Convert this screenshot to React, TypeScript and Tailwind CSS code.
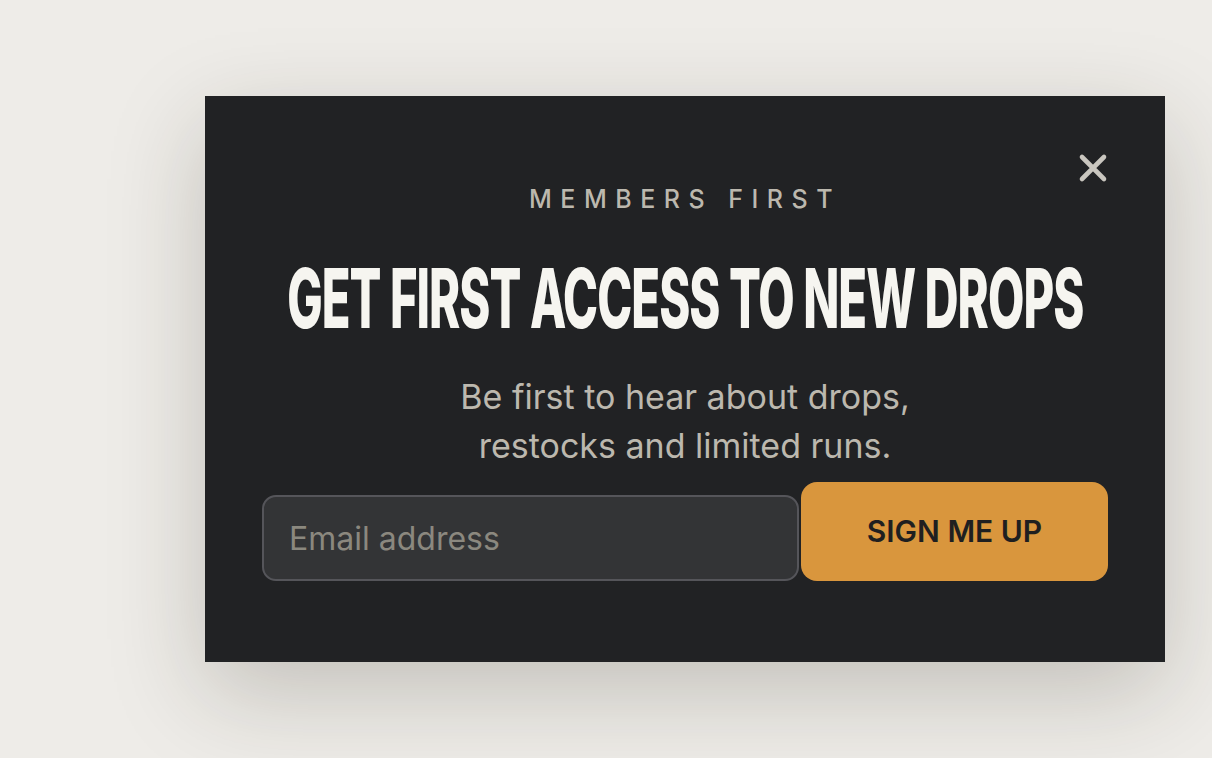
import React from 'react';

export default function App() {
    return (
        <main className="min-h-screen w-full bg-[#eeece8] pl-[205px] pt-[96px] font-['Inter','Liberation_Sans',sans-serif]">
            <div className="relative w-[960px] bg-[#212224] px-[57px] pt-[88px] pb-[81px] shadow-[0_30px_90px_rgba(40,35,25,0.22)]">
                <button aria-label="Close" className="absolute top-[55px] right-[55px] w-[34px] h-[34px] flex items-center justify-center text-[#c9c6bf]">
                    <svg width="30" height="30" viewBox="0 0 30 30" fill="none" stroke="currentColor" strokeWidth="4.6" strokeLinecap="round">
                        <path d="M4 4 L26 26 M26 4 L4 26" />
                    </svg>
                </button>

                <p className="text-center text-[25px] leading-[30px] font-medium tracking-[0.34em] text-[#bcb8ae]">MEMBERS FIRST</p>

                <div className="mt-[40px] flex justify-center">
                    <h1 className="inline-block whitespace-nowrap origin-center scale-x-[0.575] text-[82px] leading-[90px] font-extrabold tracking-[-0.02em] text-[#f6f5f0]">
                        GET FIRST ACCESS TO NEW DROPS
                    </h1>
                </div>

                <p className="mt-[28px] text-center text-[34px] leading-[49px] text-[#bcb8ae]">
                    Be first to hear about drops,<br />restocks and limited runs.
                </p>

                <form className="mt-[12px] flex items-end" onSubmit={(e) => e.preventDefault()}>
                    <input
                        type="email"
                        placeholder="Email address"
                        className="flex-1 min-w-0 h-[86px] rounded-[14px] border-2 border-[#55555a] bg-[#333436] px-[25px] text-[32px] text-[#e8e6e0] placeholder:text-[#8b887f] outline-none"
                    />
                    <button type="submit" className="ml-[2px] w-[307px] h-[99px] rounded-[16px] bg-[#d9963d] text-[30px] font-semibold text-[#1f1f20]">
                        SIGN ME UP
                    </button>
                </form>
            </div>
        </main>
    );
}
